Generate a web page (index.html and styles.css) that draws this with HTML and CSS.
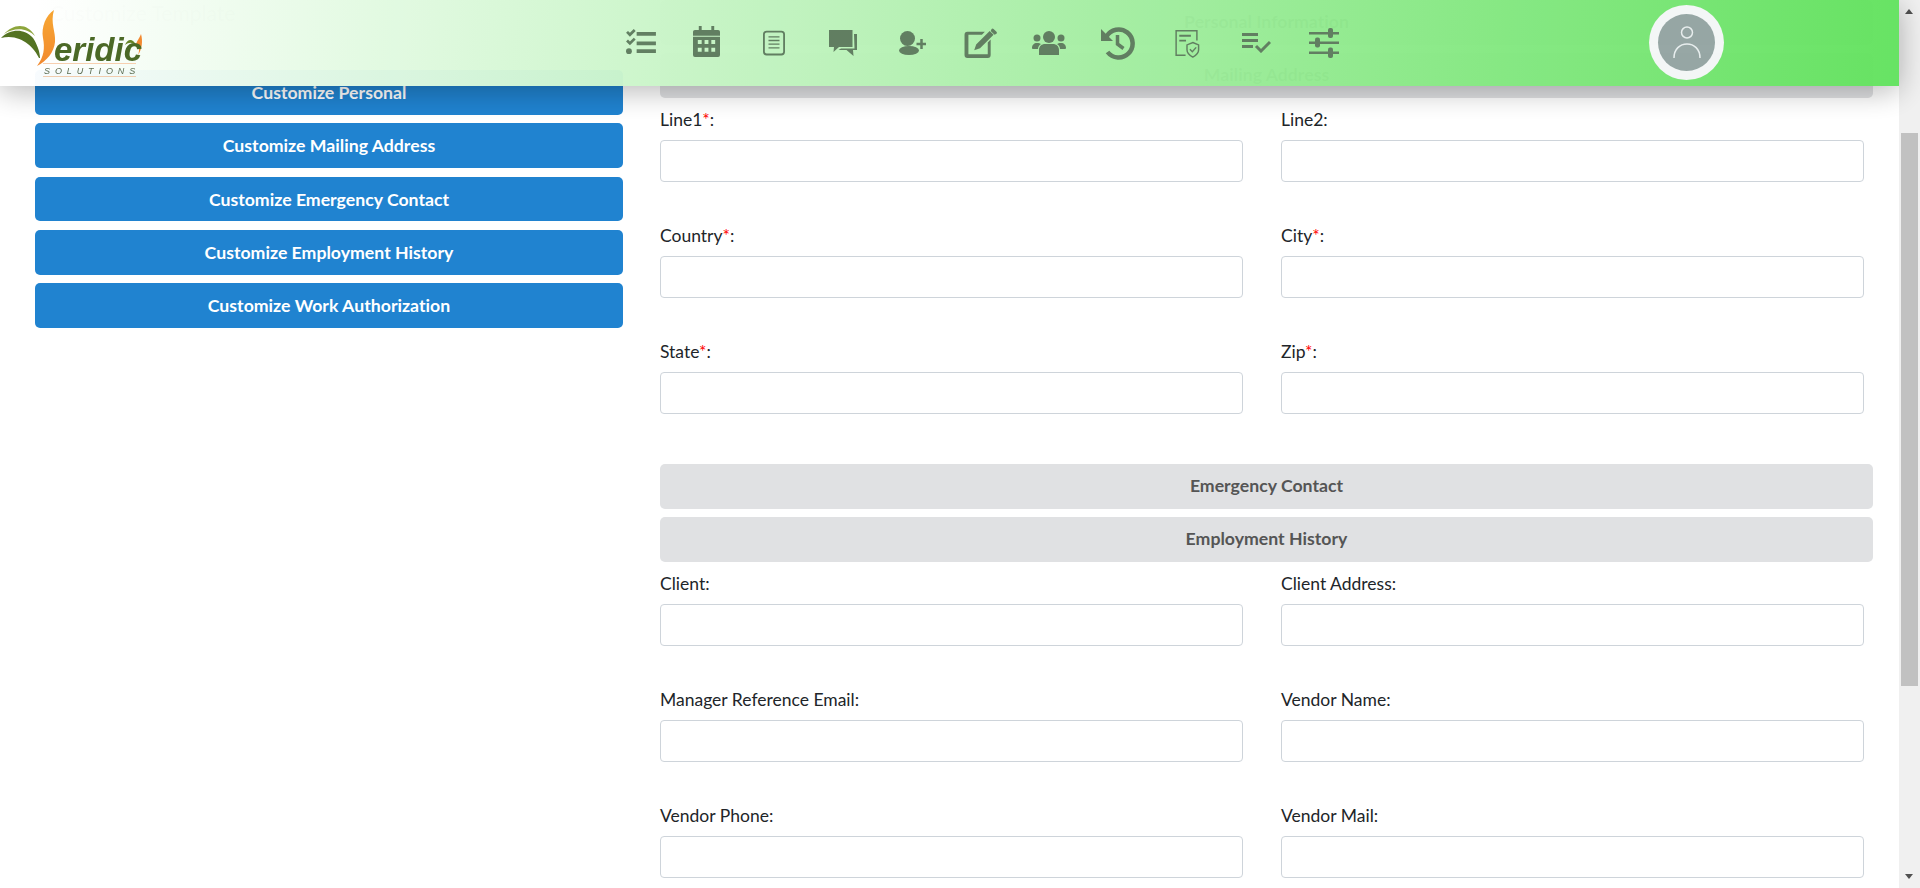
FILE: index.html
```html
<!DOCTYPE html>
<html lang="en">
<head>
    <meta charset="UTF-8">
    <link rel="stylesheet" href="styles.css">
    <title>Customize Template</title>
</head>
<body>
<header class="topbar">
    <div class="logo">
        <svg class="logo-mark" width="150" height="86" viewBox="0 0 150 86">
            <defs>
                <linearGradient id="flame" x1="0" y1="0" x2="0" y2="1">
                    <stop offset="0" stop-color="#f7a42c"/>
                    <stop offset="1" stop-color="#f2862a"/>
                </linearGradient>
            </defs>
            <path d="M1 38 C10 29 24 28 33 38 C37 44 40 52 40 58 L39 58 C34 47 20 33 1 38Z" fill="#4f6f1c"/>
            <path d="M4 34 C13 24 27 22 35 36 C27 28 15 27 4 34Z" fill="#8aa336"/>
            <path d="M54 10 C46 15 41 27 43 38 C45 48 44 57 37 66 C47 61 54 52 55 42 C56 32 50 23 54 10Z" fill="url(#flame)"/>
            <path d="M141 34 C139 39 137 41 136 44 C139 47 140 50 138 55 C142 49 143 41 141 34Z" fill="#f2862a"/>
            <path d="M125 45 C128 38 133 39 136 45 C132 42 129 42 125 45Z" fill="#5f7f1e"/>
            <rect x="43" y="63" width="93" height="1" fill="#f7cfae"/>
            <rect x="43" y="76" width="93" height="1" fill="#f7cfae"/>
        </svg>
        <span class="logo-name">eridic</span>
        <span class="logo-sub">SOLUTIONS</span>
    </div>
    <nav class="top-icons">
        <span class="ic-box ic-up"><svg class="ic" width="31" height="26" viewBox="0 0 32 27"><path d="M1 4l2-2 2 2 4-4 2 2-6 6zM1 13l2-2 2 2 4-4 2 2-6 6z"/><circle cx="4" cy="23" r="3"/><path d="M12 3h20v4H12zM12 13h20v4H12zM12 21h20v4H12z"/></svg></span>
        <span class="ic-box ic-up"><svg class="ic" width="27" height="31" viewBox="0 0 28 32"><path d="M6 0h3v4h10V0h3v4h4a2 2 0 0 1 2 2v4H0V6a2 2 0 0 1 2-2h4z"/><path fill-rule="evenodd" d="M0 11h28v19a2 2 0 0 1-2 2H2a2 2 0 0 1-2-2zM5 14.500v4h4v-4zM12 14.500v4h4v-4zM19 14.500v4h4v-4zM5 22.500v4h4v-4zM12 22.500v4h4v-4zM19 22.500v4h4v-4z"/></svg></span>
        <span class="ic-box"><svg class="ic" width="22" height="26" viewBox="0 0 24 27"><path fill-rule="evenodd" d="M4 0h16a4 4 0 0 1 4 4v19a4 4 0 0 1-4 4H4a4 4 0 0 1-4-4V4a4 4 0 0 1 4-4zM4 2a2 2 0 0 0-2 2v19a2 2 0 0 0 2 2h16a2 2 0 0 0 2-2V4a2 2 0 0 0-2-2z"/><path d="M6 6h12v1.500H6zM6 10h12v1.500H6zM6 14h12v1.500H6zM6 18h12v1.500H6z"/></svg></span>
        <span class="ic-box"><svg class="ic" width="28" height="26" viewBox="0 0 28 26"><path d="M0 0h23.500v17H10l-5.500 5 .5-5H0z"/><path d="M25 4h3v16h-4l.5 6-7-6h-8l2.500-1.500h13.500z"/></svg></span>
        <span class="ic-box"><svg class="ic" width="27" height="24" viewBox="0 0 27 24"><circle cx="8.500" cy="7.500" r="7.500"/><ellipse cx="10" cy="19.500" rx="10" ry="4.500"/><path d="M21.250 8h2.500v3.750H27.500v2.500h-3.750V18h-2.500v-3.750H17.500v-2.500h3.750z"/></svg></span>
        <span class="ic-box"><svg class="ic" width="33" height="30" viewBox="0 0 33 31"><path d="M3 4h18l-3 3H4v20h20V15l3-3v16a3 3 0 0 1-3 3H3a3 3 0 0 1-3-3V7a3 3 0 0 1 3-3z"/><path d="M26 3l4 4-14 14-6 2 2-6zM28 1a1.500 1.500 0 0 1 2 0l3 3a1.500 1.500 0 0 1 0 2l-2 1-4-4z"/></svg></span>
        <span class="ic-box"><svg class="ic" width="34" height="24" viewBox="0 0 34 24"><circle cx="17" cy="6" r="6"/><circle cx="5" cy="7" r="3.500"/><circle cx="29" cy="7" r="3.500"/><path d="M7 24v-5c0-4 3-6 6-6h8c3 0 6 2 6 6v5zM0 17c0-3 2-5 5-5 2 0 3 .5 4 1-2 1-3 3-3 5H1c-.5 0-1-.5-1-1zM34 17c0-3-2-5-5-5-2 0-3 .5-4 1 2 1 3 3 3 5h5c.5 0 1-.5 1-1z"/></svg></span>
        <span class="ic-box"><svg class="ic" width="34" height="33" viewBox="0 0 34 33"><path fill="none" stroke="#5d7b5d" stroke-width="4.500" d="M5.500 9.500a14 14 0 1 1 1 15.500"/><path d="M0 2v12h12z"/><path fill="none" stroke="#5d7b5d" stroke-width="3.500" d="M16.500 8v9l6 4.500"/></svg></span>
        <span class="ic-box"><svg class="ic" width="26" height="29" viewBox="0 0 26 30"><path d="M1 1h23v11h-1.500V2.500h-20v24h9V28H1z"/><path d="M5 6h12v2H5zM5 11h7v2H5z"/><path fill="none" stroke="#5d7b5d" stroke-width="1.500" d="M19 14l6 2.500v5c0 3.500-3 6-6 7.500-3-1.500-6-4-6-7.500v-5z"/><path fill="none" stroke="#5d7b5d" stroke-width="1.500" d="M16 21l2.500 2.500 4-4.500"/></svg></span>
        <span class="ic-box"><svg class="ic" width="29" height="20" viewBox="0 0 29 20"><path d="M0 0h16v3H0zM0 6h16v3H0zM0 12h11v3H0z"/><path fill="none" stroke="#5d7b5d" stroke-width="3" d="M14 13l5 5 9-9"/></svg></span>
        <span class="ic-box"><svg class="ic" width="30" height="30" viewBox="0 0 30 30"><path d="M0 4h30v2.500H0zM0 13.500h30V16H0zM0 23.500h30V26H0z"/><rect x="19" y="0" width="5" height="10" rx="2"/><rect x="6" y="9.500" width="5" height="10" rx="2"/><rect x="19" y="19.500" width="5" height="10.500" rx="2"/></svg></span>
    </nav>
    <div class="avatar">
        <div class="avatar-inner">
            <svg width="28" height="34" viewBox="0 0 28 34" fill="none" stroke="#e8eeee" stroke-width="1.500"><circle cx="14" cy="6.500" r="5.500"/><path d="M1 32c0-9 6-14 13-14s13 5 13 14"/></svg>
        </div>
    </div>
</header>

<div class="screen">
    <main class="page">
        <section class="side">
            <h2 class="side-title">Customize Template</h2>
            <button class="side-btn">Customize Personal</button>
            <button class="side-btn">Customize Mailing Address</button>
            <button class="side-btn">Customize Emergency Contact</button>
            <button class="side-btn">Customize Employment History</button>
            <button class="side-btn">Customize Work Authorization</button>
        </section>

        <section class="forms">
            <div class="bar">Personal Information</div>
            <div class="bar">Mailing Address</div>
            <div class="fields">
                <div class="field"><label>Line1<span class="req">*</span>:</label><input type="text"></div>
                <div class="field"><label>Line2:</label><input type="text"></div>
                <div class="field"><label>Country<span class="req">*</span>:</label><input type="text"></div>
                <div class="field"><label>City<span class="req">*</span>:</label><input type="text"></div>
                <div class="field"><label>State<span class="req">*</span>:</label><input type="text"></div>
                <div class="field"><label>Zip<span class="req">*</span>:</label><input type="text"></div>
            </div>
            <div class="bar bar-gap">Emergency Contact</div>
            <div class="bar">Employment History</div>
            <div class="fields">
                <div class="field"><label>Client:</label><input type="text"></div>
                <div class="field"><label>Client Address:</label><input type="text"></div>
                <div class="field"><label>Manager Reference Email:</label><input type="text"></div>
                <div class="field"><label>Vendor Name:</label><input type="text"></div>
                <div class="field"><label>Vendor Phone:</label><input type="text"></div>
                <div class="field"><label>Vendor Mail:</label><input type="text"></div>
            </div>
        </section>
    </main>

    <div class="scrollbar">
        <span class="arrow arrow-up"></span>
        <span class="thumb"></span>
        <span class="arrow arrow-down"></span>
    </div>
</div>
</body>
</html>
```

FILE: styles.css
```css
html, body {
    margin: 0;
    height: 100%;
    overflow: hidden;
}
body {
    font-family: Lato, "Open Sans", sans-serif;
    font-size: 17.500px;
    font-variant-ligatures: none;
    color: #212529;
    background: #fff;
}

/* fixed header, content shows through a little */
.topbar {
    position: fixed;
    top: 0;
    left: 0;
    width: 1899px;
    height: 86px;
    display: flex;
    align-items: center;
    background: linear-gradient(95deg, #fff 2%, #63e35f 100%);
    box-shadow: 0 5px 30px rgba(0, 0, 0, .3);
    opacity: .97;
    z-index: 10;
}
.logo {
    position: relative;
    width: 150px;
    height: 86px;
    flex: none;
}
.logo-mark {
    display: block;
}
.logo-name {
    position: absolute;
    left: 54px;
    top: 37px;
    font: italic 700 33px/26px "Liberation Sans", sans-serif;
    color: #46651f;
}
.logo-sub {
    position: absolute;
    left: 44px;
    top: 66px;
    font: italic 400 9px/10px "Liberation Sans", sans-serif;
    letter-spacing: 4.900px;
    color: #5c6b4d;
}
.top-icons {
    display: grid;
    grid-template-columns: 66px 66.750px 68.250px 69.250px 68.750px 68.250px 68.750px 69px 69.250px 68.500px 67.500px;
    align-items: center;
    margin-left: 457.500px;
    flex: none;
}
.ic-box {
    display: flex;
    justify-content: center;
    align-items: center;
}
.ic-up {
    margin-bottom: 3px;
}
.ic {
    fill: #5d7b5d;
    display: block;
}
.avatar {
    width: 57px;
    height: 57px;
    padding: 9px;
    margin-left: 291.250px;
    margin-bottom: 1px;
    border-radius: 50%;
    background: #f4f7f7;
    flex: none;
}
.avatar-inner {
    width: 57px;
    height: 57px;
    border-radius: 50%;
    background: #94a5a3;
    display: flex;
    align-items: center;
    justify-content: center;
}

.screen {
    display: flex;
    height: 100vh;
}
.page {
    flex: 1;
    min-width: 0;
    height: 100%;
    overflow: hidden;
    display: grid;
    grid-template-columns: 588px 1213px;
    column-gap: 37px;
    align-items: start;
    padding-left: 35px;
    box-sizing: border-box;
}

.side-title {
    margin: 0;
    height: 70px;
    padding-left: 15px;
    line-height: 26px;
    font-size: 21px;
    font-weight: 400;
    color: #bbb;
    box-sizing: border-box;
}
.side-btn {
    display: block;
    width: 100%;
    height: 44.800px;
    margin-bottom: 8.530px;
    border: 0;
    border-radius: 5px;
    background: #2083d0;
    color: #fff;
    font: 700 17.700px Lato, sans-serif;
    font-variant-ligatures: none;
}

.bar {
    height: 44.800px;
    margin-bottom: 8.530px;
    border-radius: 5px;
    background: #e0e1e3;
    color: #555;
    font-size: 17.700px;
    font-weight: 700;
    line-height: 44.800px;
    text-align: center;
}
.bar-gap {
    margin-top: 50.500px;
}
.fields {
    display: grid;
    grid-template-columns: 583px 583px;
    column-gap: 38px;
    row-gap: 42px;
    padding-top: 1px;
}
.field label {
    display: block;
    height: 24px;
    line-height: 24px;
    margin-bottom: 8px;
}
.field input {
    display: block;
    width: 100%;
    height: 42px;
    box-sizing: border-box;
    border: 1px solid #ced4da;
    border-radius: 4px;
    background: #fff;
}
.req {
    color: #f00;
}

.scrollbar {
    width: 21px;
    flex: none;
    background: #f0f0f0;
    position: relative;
}
.thumb {
    display: block;
    width: 17px;
    height: 553px;
    margin: 133px 0 0 2px;
    background: #c1c1c1;
}
.arrow {
    position: absolute;
    left: 6px;
    width: 0;
    height: 0;
    border-left: 4.500px solid transparent;
    border-right: 4.500px solid transparent;
}
.arrow-up {
    top: 9px;
    border-bottom: 5px solid #505050;
}
.arrow-down {
    bottom: 9px;
    border-top: 5px solid #505050;
}
```
